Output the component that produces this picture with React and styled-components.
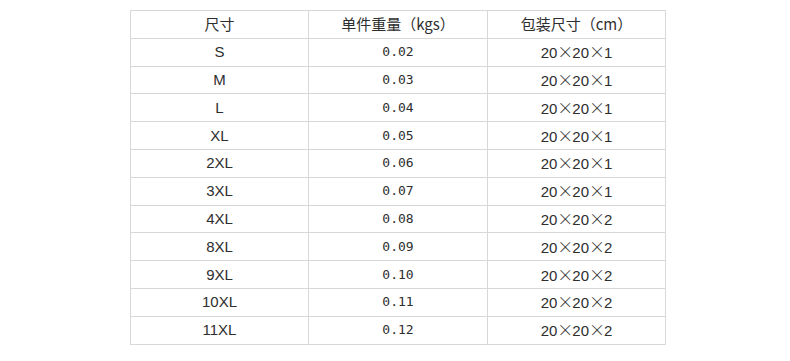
import React from 'react'
import styled, { createGlobalStyle } from 'styled-components'

const Global = createGlobalStyle`
  body {
    margin: 0;
    background: #ffffff;
    font-family: "Liberation Sans", "Noto Sans CJK SC", sans-serif;
  }
`

const Page = styled.div`
  padding: 10px 0 0 130px;
`

const Table = styled.table`
  border-collapse: collapse;
  width: 535px;
  table-layout: fixed;
  color: #2e2e2e;
`

const Row = styled.tr`
  height: 27.8px;
`

const Cell = styled.td`
  border: 1px solid #d8d8d8;
  padding: 0;
  text-align: center;
  vertical-align: middle;
  line-height: 16px;
  font-family: ${p => (p.mono ? '"DejaVu Sans Mono", "Noto Sans CJK SC", monospace' : 'inherit')};
  font-size: ${p => (p.mono ? '13px' : '15px')};
`

const HeadCell = styled(Cell).attrs({ as: 'th' })`
  font-weight: normal;
  font-family: "Noto Sans CJK SC", "Liberation Sans", sans-serif;
  font-size: 15px;
`

const Times = styled.span`
  display: inline-block;
  width: 15px;
  text-align: center;
  font-family: "Noto Sans CJK SC", sans-serif;
  font-size: 16px;
  font-weight: 300;
`

const rows = [
  ['S', '0.02', '1'],
  ['M', '0.03', '1'],
  ['L', '0.04', '1'],
  ['XL', '0.05', '1'],
  ['2XL', '0.06', '1'],
  ['3XL', '0.07', '1'],
  ['4XL', '0.08', '2'],
  ['8XL', '0.09', '2'],
  ['9XL', '0.10', '2'],
  ['10XL', '0.11', '2'],
  ['11XL', '0.12', '2'],
]

export default function App() {
  return (
    <>
      <Global />
      <Page>
        <Table>
          <colgroup>
            <col style={{ width: 178 }} />
            <col style={{ width: 179 }} />
            <col style={{ width: 178 }} />
          </colgroup>
          <thead>
            <Row>
              <HeadCell>尺寸</HeadCell>
              <HeadCell>单件重量（kgs）</HeadCell>
              <HeadCell>包装尺寸（cm）</HeadCell>
            </Row>
          </thead>
          <tbody>
            {rows.map(([size, weight, depth]) => (
              <Row key={size}>
                <Cell>{size}</Cell>
                <Cell mono>{weight}</Cell>
                <Cell>
                  20<Times>×</Times>20<Times>×</Times>{depth}
                </Cell>
              </Row>
            ))}
          </tbody>
        </Table>
      </Page>
    </>
  )
}
